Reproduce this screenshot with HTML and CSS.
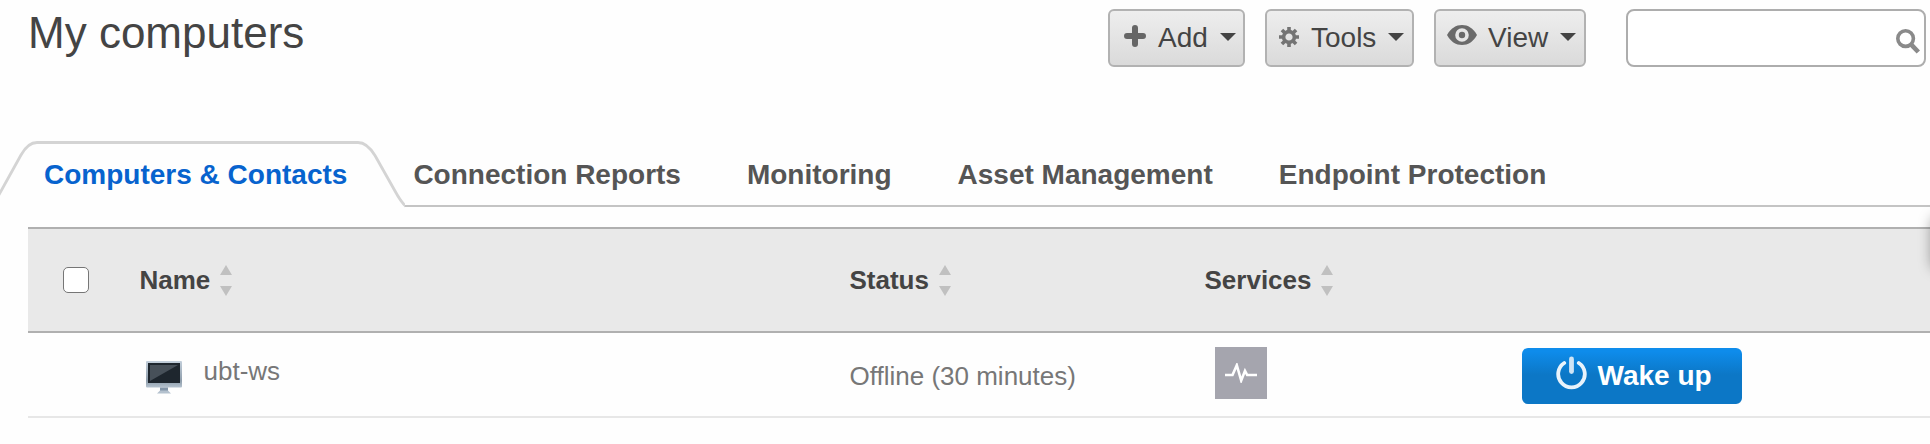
FILE: index.html
```html
<!DOCTYPE html>
<html lang="en">
<head>
<meta charset="utf-8">
<title>My computers</title>
<link rel="stylesheet" href="styles.css">
</head>
<body>
<header class="top">
  <h1 class="title">My computers</h1>
  <div class="actions">
    <button class="btn btn-add">
      <svg class="icon" width="22" height="22" viewBox="0 0 22 22"><path d="M11 3v16M3 11h16" stroke="#666" stroke-width="6" stroke-linecap="round"/></svg>
      <span>Add</span><i class="caret"></i>
    </button>
    <button class="btn btn-tools">
      <svg class="icon" width="20" height="20" viewBox="-10 -10 20 20"><g stroke="#747474" fill="none"><circle r="5.4" stroke-width="3.6"/><g stroke-width="3.6"><path d="M0-6V-10M0 6V10M-6 0H-10M6 0H10"/><path transform="rotate(45)" d="M0-6V-10M0 6V10M-6 0H-10M6 0H10"/></g></g></svg>
      <span>Tools</span><i class="caret"></i>
    </button>
    <button class="btn btn-view">
      <svg class="icon" width="30" height="20" viewBox="0 0 30 20"><path d="M0 10C4 3 9 0 15 0s11 3 15 10c-4 7-9 10-15 10S4 17 0 10z" fill="#6a6a6a"/><circle cx="15" cy="10" r="5" fill="none" stroke="#e6e6e6" stroke-width="3.6"/></svg>
      <span>View</span><i class="caret"></i>
    </button>
    <label class="search">
      <input type="text" aria-label="Search">
      <svg class="search-icon" width="24" height="25" viewBox="0 0 24 25"><circle cx="9.6" cy="9.6" r="7.800" fill="none" stroke="#8a8a8a" stroke-width="3.600"/><path d="M15.500 15.800L22.300 23" stroke="#8a8a8a" stroke-width="4.600"/></svg>
    </label>
  </div>
</header>

<nav class="tabs">
  <a class="tab tab-active">
    <svg class="tab-shape" width="405" height="68" viewBox="0 0 405 68"><path d="M-2 56.500L21 15Q28 2.500 37 2.500H358Q367 2.500 375 15.500L395 51Q401 62 406 66.500" fill="none" stroke="#d4d4d4" stroke-width="2.800"/></svg>
    <span class="tab-label">Computers &amp; Contacts</span>
  </a>
  <a class="tab">Connection Reports</a>
  <a class="tab">Monitoring</a>
  <a class="tab">Asset Management</a>
  <a class="tab">Endpoint Protection</a>
</nav>

<main class="table">
  <div class="row head">
    <div class="cell"><input class="check" type="checkbox" aria-label="Select all"></div>
    <div class="cell">Name <svg class="sort" width="12" height="31" viewBox="0 0 12 31"><path d="M6 0l6 10H0zM0 21h12L6 31z" fill="#c0c0c0"/></svg></div>
    <div class="cell">Status <svg class="sort" width="12" height="31" viewBox="0 0 12 31"><path d="M6 0l6 10H0zM0 21h12L6 31z" fill="#c0c0c0"/></svg></div>
    <div class="cell">Services <svg class="sort" width="12" height="31" viewBox="0 0 12 31"><path d="M6 0l6 10H0zM0 21h12L6 31z" fill="#c0c0c0"/></svg></div>
    <div class="cell"></div>
  </div>
  <div class="row item">
    <div class="cell"></div>
    <div class="cell name">
      <svg class="monitor" width="38" height="34" viewBox="0 0 38 34"><defs><linearGradient id="bezel" x2="0" y2="1"><stop stop-color="#c3cfdb"/><stop offset=".75" stop-color="#8e9dab"/><stop offset="1" stop-color="#b5c2cf"/></linearGradient></defs><rect x="1" y="1" width="36" height="26.500" rx="1" fill="url(#bezel)"/><rect x="3" y="3" width="32" height="20" fill="#1e262e"/><path d="M5 5h28L5 21z" fill="#475059"/><path d="M15 27.500h8V31h-8z" fill="#8395a8"/><path d="M15 30.500h8l3 3H12z" fill="#b4c1ce"/></svg>
      <span>ubt-ws</span>
    </div>
    <div class="cell status">Offline (30 minutes)</div>
    <div class="cell"><span class="service"><svg width="32" height="20" viewBox="0 0 32 20"><path d="M0 12H7.500L11.800 2.200 16.200 17.500 20 7.800 22.200 12H32" fill="none" stroke="#fff" stroke-width="2.600"/></svg></span></div>
    <div class="cell"><button class="wake"><svg width="31" height="34" viewBox="0 0 31 34"><g fill="none" stroke="#e9f3fb" stroke-linecap="round"><path d="M8.200 7A13.300 13.300 0 1 0 22.800 7" stroke-width="3.800"/><path d="M15.500 3v12.500" stroke="#cfe4f5" stroke-width="4.800"/></g></svg><span>Wake up</span></button></div>
  </div>
</main>
<div class="side-handle"></div>
</body>
</html>
```
FILE: styles.css
```css
* { box-sizing: border-box; }
body {
  margin: 0;
  height: 444px;
  overflow: hidden;
  position: relative;
  background: #fefefe;
  color: #444;
  font-family: "Liberation Sans", Arial, sans-serif;
  font-size: 28px;
}
button, input { font: inherit; color: inherit; margin: 0; }

.top {
  display: flex;
  justify-content: space-between;
  height: 141px;
  padding: 9px 4px 0 28px;
}
.title { margin: 0; font-size: 44px; line-height: 50px; font-weight: 400; margin-top: -1px; }
.actions { display: flex; align-items: flex-start; gap: 20px; }
.btn {
  display: flex;
  align-items: center;
  height: 58px;
  padding: 0;
  border: 2px solid #b2b2b2;
  border-radius: 6px;
  background: linear-gradient(#eee, #dadada);
}
.icon { flex: none; margin-top: -4px; }
.caret {
  margin: -2px 0 0 12px;
  border: 8px solid transparent;
  border-top-color: #444;
  border-bottom: 0;
}
.btn-add { width: 137px; padding-left: 14px; }
.btn-add span { margin-left: 12px; }
.btn-tools { width: 149px; padding-left: 12px; }
.btn-tools .icon { margin-top: -2px; }
.btn-tools span { margin-left: 12px; }
.btn-view { width: 152px; padding-left: 11px; }
.btn-view .icon { margin-top: -6px; }
.btn-view span { margin-left: 11px; }
.search {
  display: flex;
  width: 300px;
  height: 58px;
  margin-left: 20px;
  padding: 0 4px 0 8px;
  border: 2px solid #adadad;
  border-radius: 8px;
  background: #fff;
}
.search input { flex: 1; min-width: 0; border: 0; outline: 0; background: none; }
.search-icon { margin-top: 18px; }

.tabs {
  display: flex;
  gap: 66px;
  height: 66px;
  padding-left: 44px;
  border-bottom: 2px solid #c4c4c4;
  line-height: 32px;
  font-weight: 700;
  color: #555;
}
.tab { padding-top: 18px; white-space: nowrap; }
.tab-active { position: relative; color: #0763ce; }
.tab-shape { position: absolute; left: -44px; top: -1px; background: #fefefe; }
.tab-label { position: relative; }

.table { margin: 20px 0 0 28px; }
.row {
  display: grid;
  grid-template-columns: 111.5px 710px 355px 316.5px 1fr;
}
.head {
  height: 106px;
  align-items: center;
  border: solid #b0b0b0;
  border-width: 2px 0;
  background: #e9e9e9;
  font-size: 26px;
  font-weight: 700;
}
.head .cell { display: flex; align-items: center; }
.sort { margin-left: 10px; }
.check {
  appearance: none;
  width: 26px;
  height: 26px;
  margin-left: 35px;
  border: 1px solid #767676;
  border-radius: 5px;
  background: #fff;
}
.item {
  height: 85px;
  border-bottom: 2px solid #e7e7e7;
  font-size: 26px;
  line-height: 30px;
  color: #777;
}
.name { display: flex; align-items: flex-start; padding: 23px 0 0 5.5px; }
.monitor { margin: 4px 20.5px 0 0; }
.status { padding-top: 28px; }
.service {
  display: flex;
  align-items: center;
  justify-content: center;
  width: 52px;
  height: 52px;
  margin: 14px 0 0 10.5px;
  background: #a5a5ae;
}
.wake {
  display: flex;
  align-items: center;
  width: 220px;
  height: 56px;
  margin: 15px 0 0 1px;
  padding: 0 0 6px 33.5px;
  border: 0;
  border-radius: 6px;
  background: linear-gradient(#0e8ceb 6%, #0c77c6 48%);
  color: #fff;
  font-size: 28px;
  font-weight: 700;
}
.wake span { margin: 6px 0 0 11px; }

/* Panel parked past the right edge; only its shadow shows */
.side-handle {
  position: absolute;
  left: 1932px;
  top: 215px;
  width: 40px;
  height: 52px;
  border-radius: 6px;
  box-shadow: 0 2px 14px rgba(0, 0, 0, .4);
}
```
